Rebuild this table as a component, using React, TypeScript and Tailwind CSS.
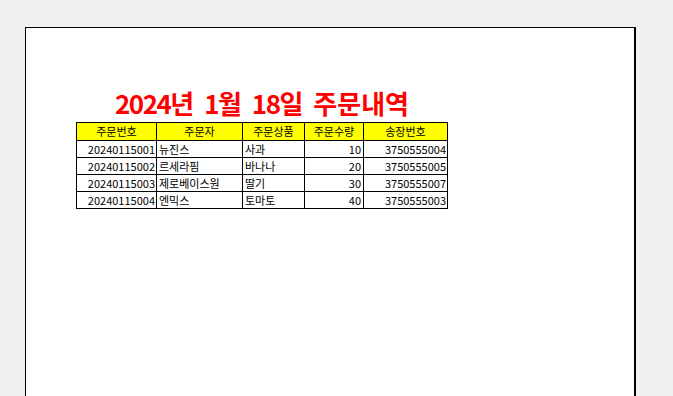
import React from 'react'

const rows = [
  ['20240115001', '뉴진스', '사과', '10', '3750555004'],
  ['20240115002', '르세라핌', '바나나', '20', '3750555005'],
  ['20240115003', '제로베이스원', '딸기', '30', '3750555007'],
  ['20240115004', '엔믹스', '토마토', '40', '3750555003'],
]

const headers = ['주문번호', '주문자', '주문상품', '주문수량', '송장번호']

export default function App() {
  return (
    <div className="min-h-screen bg-[#f0f0f0] pt-[27px] pl-[25px] overflow-hidden" style={{ height: 396 }}>
      <div
        className="w-[611px] h-[400px] bg-white border-l border-t border-r-2 border-black pl-[50px] pt-[56px]"
        style={{ fontFamily: '"Malgun Gothic", "Noto Sans CJK KR", "Noto Sans", sans-serif' }}
      >
        <div className="w-[372px] text-center text-[26px] leading-[38px] font-bold text-[#ff0000] [word-spacing:4px]">
          <span className="tracking-[-1.5px]">2024</span>년 <span className="tracking-[-1.5px]">1</span>월{' '}
          <span className="tracking-[-1.5px]">18</span>일 주문내역
        </div>
        <table className="table-fixed border-collapse text-[11px] leading-[15px] text-black">
          <colgroup>
            <col className="w-[80px]" />
            <col className="w-[86px]" />
            <col className="w-[62px]" />
            <col className="w-[59px]" />
            <col className="w-[84px]" />
          </colgroup>
          <thead>
            <tr className="bg-[#ffff00] h-[18px]">
              {headers.map((h) => (
                <th key={h} className="border border-black font-normal text-center p-0">
                  {h}
                </th>
              ))}
            </tr>
          </thead>
          <tbody>
            {rows.map((r) => (
              <tr key={r[0]} className="h-[17px]">
                <td className="border border-black text-right pr-[1px] p-0">{r[0]}</td>
                <td className="border border-black text-left pl-[2px] p-0">{r[1]}</td>
                <td className="border border-black text-left pl-[2px] p-0">{r[2]}</td>
                <td className="border border-black text-right pr-[2px] p-0">{r[3]}</td>
                <td className="border border-black text-right pr-[1px] p-0">{r[4]}</td>
              </tr>
            ))}
          </tbody>
        </table>
      </div>
    </div>
  )
}
